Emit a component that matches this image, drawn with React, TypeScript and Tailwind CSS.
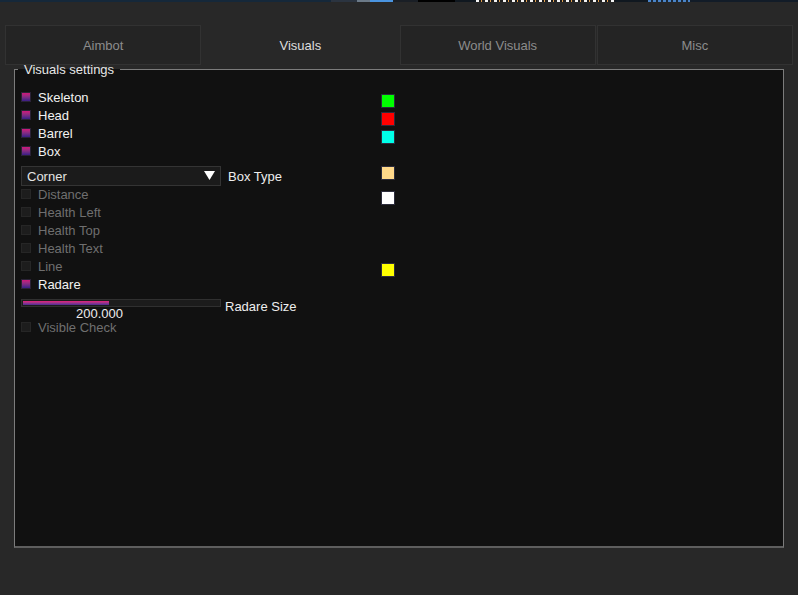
import React from 'react'

type Row = {
  label: string
  checked: boolean
  swatch?: string
}

const TOP_ROWS: Row[] = [
  { label: 'Skeleton', checked: true, swatch: 'bg-[#00ff00]' },
  { label: 'Head', checked: true, swatch: 'bg-[#ff0000]' },
  { label: 'Barrel', checked: true, swatch: 'bg-[#00ffe8]' },
  { label: 'Box', checked: true },
]

const MID_ROWS: Row[] = [
  { label: 'Distance', checked: false, swatch: 'bg-[#ffffff]' },
  { label: 'Health Left', checked: false },
  { label: 'Health Top', checked: false },
  { label: 'Health Text', checked: false },
  { label: 'Line', checked: false, swatch: 'bg-[#ffff00]' },
  { label: 'Radare', checked: true },
]

const TABS = ['Aimbot', 'Visuals', 'World Visuals', 'Misc']

function Swatch({ color }: { color: string }) {
  return <div className={`w-[14px] h-[14px] border border-[#2c2c3c] ${color}`} />
}

function CheckRow({ row }: { row: Row }) {
  return (
    <div className="flex h-[18px]">
      <div className="w-[360px] flex items-center gap-[7px]">
        <div
          className={
            row.checked
              ? 'w-[10px] h-[10px] border border-[#2a2236] bg-linear-to-b from-[#d0127a] to-[#3a1c86]'
              : 'w-[10px] h-[10px] border border-[#262626] bg-[#1d1d1d]'
          }
        />
        <span className={row.checked ? 'text-[#f2f2f2]' : 'text-[#6f6f6f]'}>
          {row.label}
        </span>
      </div>
      {row.swatch && (
        <div className="mt-[6px]">
          <Swatch color={row.swatch} />
        </div>
      )}
    </div>
  )
}

export default function App() {
  return (
    <div className="w-[798px] h-[595px] bg-[#282828] overflow-hidden font-['Liberation_Sans',Arial,sans-serif] text-[13px] leading-[15px]">
      {/* desktop strip peeking above the window */}
      <div className="flex h-[2px] bg-[#142232]">
        <div className="w-[331px] bg-[#15283a]" />
        <div className="w-[26px] bg-[#2b3440]" />
        <div className="w-[13px] bg-[#6c7a88]" />
        <div className="w-[23px] bg-[#4a94e0]" />
        <div className="w-[25px] bg-[#1a1f26]" />
        <div className="w-[37px] bg-[#000000]" />
        <div className="w-[21px] bg-[#101820]" />
        <div className="w-[139px] bg-[repeating-linear-gradient(90deg,#f4f4f4_0px,#f4f4f4_3px,#1a1a1a_3px,#1a1a1a_5px,#e0a050_5px,#e0a050_6px,#202020_6px,#202020_9px)]" />
        <div className="w-[33px] bg-[#101820]" />
        <div className="w-[42px] bg-[repeating-linear-gradient(90deg,#4a84c8_0px,#4a84c8_3px,#1a2838_3px,#1a2838_5px)]" />
        <div className="flex-1 bg-[#121c28]" />
      </div>

      {/* tabs */}
      <div className="mt-[23px] px-[5px] grid grid-cols-4 gap-px h-[40px]">
        {TABS.map((tab) =>
          tab === 'Visuals' ? (
            <div key={tab} className="flex items-center justify-center text-[#dedede]">
              {tab}
            </div>
          ) : (
            <div
              key={tab}
              className="flex items-center justify-center border border-[#323232] bg-[#242424] text-[#8c8c8c]"
            >
              {tab}
            </div>
          )
        )}
      </div>

      {/* settings group */}
      <fieldset className="mx-[14px] mt-[-3px] h-[486px] border border-[#7c7c7c] border-b-2 border-b-[#5e5e5e] bg-[#111111] pl-[6px] pr-0 pt-0 pb-0 m-0">
        <legend className="ml-[-3px] px-[6px] text-[#e6e6e6] leading-[15px]">
          Visuals settings
        </legend>

        <div className="mt-[11px] flex flex-col">
          {TOP_ROWS.map((row) => (
            <CheckRow key={row.label} row={row} />
          ))}

          {/* combo */}
          <div className="mt-[6px] mb-[-1px] flex h-[20px]">
            <div className="w-[360px] flex items-center gap-[7px]">
              <div className="w-[200px] h-[20px] border border-[#343434] bg-[#1b1b1b] flex items-center justify-between pl-[5px] pr-[5px]">
                <span className="text-[#e4e4e4]">Corner</span>
                <svg width="11" height="10" viewBox="0 0 11 10">
                  <polygon points="0,0 11,0 5.5,9" fill="#ffffff" />
                </svg>
              </div>
              <span className="text-[#eeeeee]">Box Type</span>
            </div>
            <Swatch color="bg-[#ffd98a]" />
          </div>

          {MID_ROWS.map((row) => (
            <CheckRow key={row.label} row={row} />
          ))}

          {/* slider */}
          <div className="mt-[6px] mb-[-3px] flex items-start gap-[4px]">
            <div className="w-[200px] flex flex-col">
              <div className="h-[8px] border border-[#303030] bg-[#1c1c1c] p-px">
                <div className="h-full w-[86px] bg-linear-to-b from-[#e8147a] to-[#4a2894]" />
              </div>
              <span className="ml-[55px] leading-[14px] text-[#eeeeee]">200.000</span>
            </div>
            <span className="text-[#eeeeee]">Radare Size</span>
          </div>

          <CheckRow row={{ label: 'Visible Check', checked: false }} />
        </div>
      </fieldset>
    </div>
  )
}
